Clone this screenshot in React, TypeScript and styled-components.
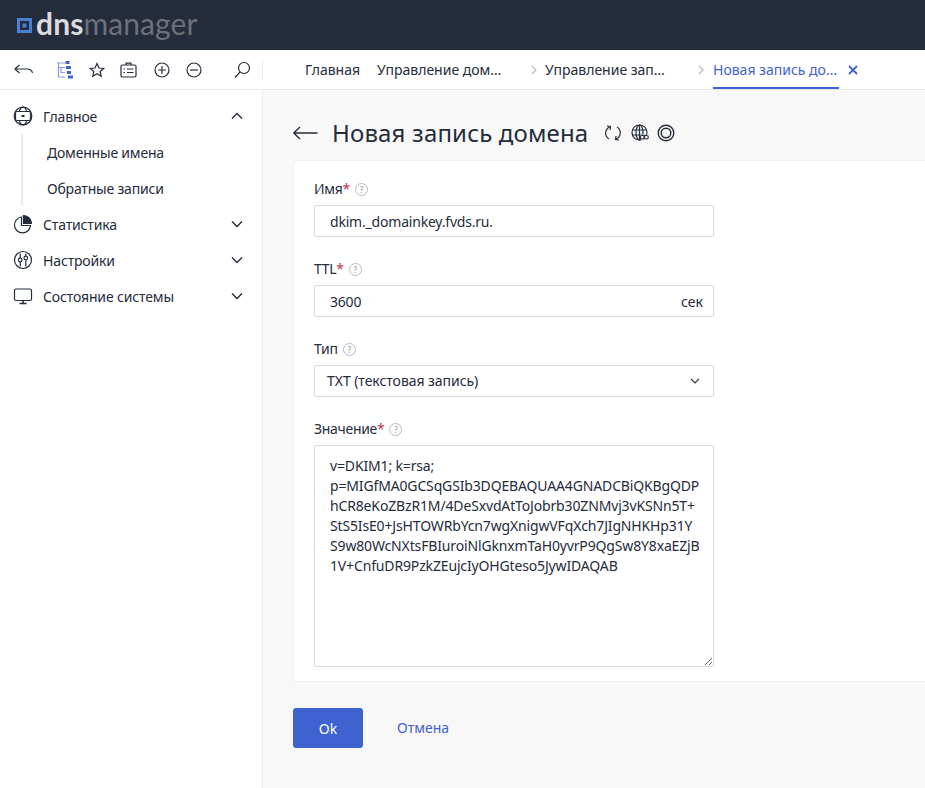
import React from "react";
import styled, { createGlobalStyle } from "styled-components";

const Global = createGlobalStyle`
  html, body { margin: 0; padding: 0; height: 100%; overflow: hidden; }
  body { font-family: "Noto Sans", "Open Sans", sans-serif; color: #252c3b; background: #f8f8f8; }
  * { box-sizing: border-box; }
`;

const Page = styled.div`
  width: 925px; height: 788px; display: flex; flex-direction: column; overflow: hidden;
`;
const Header = styled.header`
  height: 50px; background: #252c3b; display: flex; align-items: center; padding-left: 17px; gap: 3px; flex: none;
`;
const LogoText = styled.div`
  font-family: "Lato", sans-serif; font-size: 30px; line-height: 50px; letter-spacing: 0.1px; color: #6c717c; margin-top: -4px;
`;
const LogoStrong = styled.span`
  color: #d9dbde; font-weight: 700;
`;
const Toolbar = styled.div`
  height: 40px; background: #fff; border-bottom: 1px solid #e9e9ea; display: flex; flex: none;
`;
const ToolGroup = styled.div`
  width: 263px; display: flex; align-items: center; padding: 0 0 0 14px; position: relative;
`;
const ToolDivider = styled.div`
  width: 1px; height: 20px; background: #ececec; position: absolute; right: 0; top: 10px;
`;
const ToolIcon = styled.svg<{ $gap: number; $tint?: boolean }>`
  width: 20px; height: 20px; flex: none; margin-right: ${p => p.$gap}px; fill: none;
  stroke: ${p => (p.$tint ? "#8ba0e0" : "#252c3b")}; stroke-width: 1.2;
`;
const Tabs = styled.nav`
  display: flex; align-items: stretch; padding-left: 42px; font-size: 14px;
`;
const Tab = styled.div<{ $w: number; $active?: boolean }>`
  width: ${p => p.$w}px; display: flex; align-items: center; white-space: nowrap; height: 39px;
  color: ${p => (p.$active ? "#3e62cf" : "#252c3b")};
  flex: none;
`;
const TabLabel = styled.span`
  display: inline-flex; align-items: center; height: 39px; width: 126px;
  border-bottom: 2px solid #3e62cf;
  padding-top: 2px;
`;
const Crumb = styled.svg<{ $end?: boolean }>`
  width: 6px; height: 10px; fill: none; stroke: #b5b8bd; stroke-width: 1.1; flex: none;
  margin: ${p => (p.$end ? "0 9px 0 auto" : "0 8px 0 0")};
`;
const CloseX = styled.svg`
  width: 10px; height: 10px; margin-left: 9px; fill: none; stroke: #3e62cf; stroke-width: 1.8; flex: none;
`;
const Body = styled.div`
  flex: 1; display: flex; min-height: 0;
`;
const Sidebar = styled.aside`
  width: 263px; background: #fff; border-right: 1px solid #ececec; padding-top: 8px; flex: none; font-size: 14px;
`;
const NavRow = styled.div`
  height: 36px; display: flex; align-items: center; padding-left: 13px;
`;
const NavIcon = styled.svg`
  width: 20px; height: 20px; margin-right: 10px; fill: none; stroke: #252c3b; stroke-width: 1.2; flex: none;
`;
const NavLabel = styled.span`
  flex: 1; letter-spacing: -0.15px;
`;
const Chevron = styled.svg`
  width: 12px; height: 8px; margin-right: 19px; fill: none; stroke: #252c3b; stroke-width: 1.4; flex: none;
`;
const SubList = styled.div`
  margin-left: 21px; border-left: 2px solid #ececec; padding-left: 24px;
`;
const SubItem = styled.div`
  height: 36px; display: flex; align-items: center; letter-spacing: -0.2px;
`;
const Main = styled.main`
  flex: 1; padding: 0 0 0 30px; min-width: 0;
`;
const TitleRow = styled.div`
  height: 70px; display: flex; align-items: center; padding-top: 16px;
`;
const BackArrow = styled.svg`
  width: 25px; height: 14px; margin-right: 14px; fill: none; stroke: #252c3b; stroke-width: 1.3; flex: none;
`;
const Title = styled.h1`
  margin: 0 16px 0 0; font-size: 24px; font-weight: 400; line-height: 32px; white-space: nowrap; letter-spacing: 0.16px;
`;
const TitleIcon = styled.svg<{ $gap: number }>`
  width: 18px; height: 18px; margin-right: ${p => p.$gap}px; fill: none; stroke: #252c3b; stroke-width: 1.2; flex: none;
`;
const Card = styled.section`
  background: #fff; border: 1px solid #efefef; border-right: none; border-radius: 4px 0 0 4px; height: 522px; padding: 20px 0 0 20px;
`;
const Field = styled.div`
  width: 400px; margin-bottom: 24px;
`;
const LabelRow = styled.div`
  height: 16px; display: flex; align-items: center; font-size: 14px; line-height: 16px; margin-bottom: 8px; letter-spacing: -0.3px;
`;
const Req = styled.span`
  color: #c2334d;
`;
const Hint = styled.span`
  width: 13px; height: 13px; border: 1px solid #b9bbc0; border-radius: 50%; margin-left: 5px; color: #8d9097;
  font-size: 8px; line-height: 11px; text-align: center; flex: none; letter-spacing: 0;
`;
const InputWrap = styled.div`
  height: 32px; border: 1px solid #d9d9d9; border-radius: 2px; background: #fff; display: flex; align-items: center;
  font-size: 14px;
`;
const TextInput = styled.input`
  border: none; outline: none; background: transparent; flex: 1; min-width: 0; height: 30px; padding: 0 0 0 15px;
  font: inherit; color: #252c3b; letter-spacing: -0.2px;
`;
const Unit = styled.span`
  margin-right: 10px;
`;
const SelectValue = styled.span`
  flex: 1; padding-left: 12px; letter-spacing: -0.05px; margin-top: -1px;
`;
const SelectChevron = styled.svg`
  width: 10px; height: 6px; margin-right: 13px; fill: none; stroke: #252c3b; stroke-width: 1.2; flex: none;
`;
const Area = styled.textarea`
  display: block; width: 400px; height: 222px; border: 1px solid #d9d9d9; border-radius: 2px; outline: none;
  padding: 10px 15px 6px; font: inherit; font-size: 14px; line-height: 20px; color: #252c3b; background: #fff;
  white-space: pre; overflow: hidden; letter-spacing: -0.15px;
`;
const Actions = styled.div`
  display: flex; align-items: center; margin-top: 26px;
`;
const OkButton = styled.button`
  width: 70px; height: 40px; border: none; border-radius: 3px; background: #3e62cf; color: #fff; font: inherit; font-size: 14px; padding: 0;
`;
const CancelLink = styled.a`
  margin-left: 34px; color: #3e62cf; font-size: 14px; margin-top: -1px;
`;

const chevronDown = "M1 1.5 L6 6.5 L11 1.5";
const chevronUp = "M1 6.5 L6 1.5 L11 6.5";

const value = `v=DKIM1; k=rsa;
p=MIGfMA0GCSqGSIb3DQEBAQUAA4GNADCBiQKBgQDP
hCR8eKoZBzR1M/4DeSxvdAtToJobrb30ZNMvj3vKSNn5T+
StS5IsE0+JsHTOWRbYcn7wgXnigwVFqXch7JIgNHKHp31Y
S9w80WcNXtsFBIuroiNlGknxmTaH0yvrP9QgSw8Y8xaEZjB
1V+CnfuDR9PzkZEujcIyOHGteso5JywIDAQAB`;

export default function App() {
  return (
    <Page>
      <Global />
      <Header>
        <svg width="16" height="16" viewBox="0 0 16 16" aria-hidden="true">
          <path d="M0 1h15v15H0z M3 4v9h9V4z" fill="#4a7fd6" fillRule="evenodd" />
          <rect x="5.5" y="6.5" width="4" height="4" fill="#4a7fd6" />
        </svg>
        <LogoText><LogoStrong>dns</LogoStrong>manager</LogoText>
      </Header>
      <Toolbar>
        <ToolGroup>
          <ToolIcon $gap={22} viewBox="0 0 20 20">
            <path d="M0.8 9 H13 C16 9 18 10.5 18.5 13 M0.8 9 L5.5 5 M0.8 9 L5.5 13" />
          </ToolIcon>
          <ToolIcon $gap={11} $tint viewBox="0 0 20 20">
            <path d="M1 3 H9 M2.5 3 V17 H9 M2.5 7.5 H9 M5 7.5 V12.5 H9" />
            <rect x="9.5" y="1" width="4" height="3" fill="#3e62cf" stroke="none" />
            <rect x="10" y="6" width="5" height="3" fill="#3e62cf" stroke="none" />
            <rect x="11" y="11" width="4" height="3" fill="#3e62cf" stroke="none" />
            <rect x="12" y="15.5" width="5" height="3" fill="#3e62cf" stroke="none" />
          </ToolIcon>
          <ToolIcon $gap={12} viewBox="0 0 20 20">
            <path d="M10 3.5 L12 8 L16.7 8.4 L13.1 11.5 L14.2 16.2 L10 13.7 L5.8 16.2 L6.9 11.5 L3.3 8.4 L8 8 Z" />
          </ToolIcon>
          <ToolIcon $gap={13} viewBox="0 0 20 20">
            <rect x="2" y="5" width="15" height="12" rx="1.5" />
            <path d="M7 5 V3.2 H12 V5 M4.5 9 H6 M8 9 H14.5 M4.5 12.5 H6 M8 12.5 H14.5" />
          </ToolIcon>
          <ToolIcon $gap={12} viewBox="0 0 20 20">
            <circle cx="10" cy="10" r="7" />
            <path d="M10 6 V14 M6 10 H14" />
          </ToolIcon>
          <ToolIcon $gap={28} viewBox="0 0 20 20">
            <circle cx="10" cy="10" r="7" />
            <path d="M6 10 H14" />
          </ToolIcon>
          <ToolIcon $gap={0} viewBox="0 0 20 20">
            <circle cx="12" cy="8" r="5.5" />
            <path d="M8 12 L3 17.5" />
          </ToolIcon>
          <ToolDivider />
        </ToolGroup>
        <Tabs>
          <Tab $w={72}>Главная</Tab>
          <Tab $w={154}>Управление дом…</Tab>
          <Tab $w={182}>
            <Crumb viewBox="0 0 6 10"><path d="M1 1 L5 5 L1 9" /></Crumb>
            Управление зап…
            <Crumb $end viewBox="0 0 6 10"><path d="M1 1 L5 5 L1 9" /></Crumb>
          </Tab>
          <Tab $w={160} $active>
            <TabLabel>Новая запись до…</TabLabel>
            <CloseX viewBox="0 0 10 10"><path d="M1 1 L9 9 M9 1 L1 9" /></CloseX>
          </Tab>
        </Tabs>
      </Toolbar>
      <Body>
        <Sidebar>
          <NavRow>
            <NavIcon viewBox="0 0 20 20">
              <circle cx="10" cy="10" r="8.8" />
              <ellipse cx="10" cy="10" rx="4.5" ry="8.8" />
              <rect x="2.5" y="5.5" width="15" height="9" rx="1.5" fill="#fff" />
              <rect x="8.5" y="9" width="3" height="2" fill="#252c3b" stroke="none" />
            </NavIcon>
            <NavLabel>Главное</NavLabel>
            <Chevron viewBox="0 0 12 8"><path d={chevronUp} /></Chevron>
          </NavRow>
          <SubList>
            <SubItem>Доменные имена</SubItem>
            <SubItem>Обратные записи</SubItem>
          </SubList>
          <NavRow>
            <NavIcon viewBox="0 0 20 20">
              <path d="M8.5 3 A8 8 0 1 0 17.5 11.5 H8.5 Z" />
              <path d="M10.5 1.5 A8 8 0 0 1 18.5 9.5 H10.5 Z" fill="#252c3b" />
            </NavIcon>
            <NavLabel>Статистика</NavLabel>
            <Chevron viewBox="0 0 12 8"><path d={chevronDown} /></Chevron>
          </NavRow>
          <NavRow>
            <NavIcon viewBox="0 0 20 20">
              <circle cx="10" cy="10" r="8.5" />
              <path d="M7.2 3.5 V8 M7.2 12 V16.5 M12.8 3.5 V6 M12.8 10 V16.5" />
              <circle cx="7.2" cy="10" r="1.8" />
              <circle cx="12.8" cy="8" r="1.8" />
            </NavIcon>
            <NavLabel>Настройки</NavLabel>
            <Chevron viewBox="0 0 12 8"><path d={chevronDown} /></Chevron>
          </NavRow>
          <NavRow>
            <NavIcon viewBox="0 0 20 20">
              <rect x="1.5" y="3" width="17" height="11.5" rx="1.5" />
              <path d="M10 14.5 V17 M6.5 17.5 H13.5" strokeWidth="1.6" />
            </NavIcon>
            <NavLabel>Состояние системы</NavLabel>
            <Chevron viewBox="0 0 12 8"><path d={chevronDown} /></Chevron>
          </NavRow>
        </Sidebar>
        <Main>
          <TitleRow>
            <BackArrow viewBox="0 0 25 14"><path d="M0.8 7 H24.5 M7 1 L0.8 7 L7 13" /></BackArrow>
            <Title>Новая запись домена</Title>
            <TitleIcon $gap={9} viewBox="0 0 18 18">
              <path d="M6.5 2.5 C2 4 0.5 9 2.5 12.5 C3 13.5 4 14.5 5 15 M3 2 L6.5 2.5 L6 6" />
              <path d="M11.5 15.5 C16 14 17.5 9 15.5 5.5 C15 4.5 14 3.5 13 3 M15 16 L11.5 15.5 L12 12" />
            </TitleIcon>
            <TitleIcon $gap={8} viewBox="0 0 18 18">
              <circle cx="8.5" cy="8.5" r="7.5" />
              <ellipse cx="8.5" cy="8.5" rx="3.5" ry="7.5" />
              <path d="M1 6 H16 M1 11 H16 M8.5 1 V16" />
              <rect x="9" y="10.5" width="8.5" height="5.5" rx="2.7" fill="#fff" stroke="none" />
              <rect x="9.3" y="11.5" width="4.5" height="3.5" rx="1.7" />
              <rect x="12.8" y="11.5" width="4.5" height="3.5" rx="1.7" />
            </TitleIcon>
            <TitleIcon $gap={0} viewBox="0 0 18 18">
              <circle cx="9" cy="9" r="7.8" strokeWidth="1.4" />
              <circle cx="9" cy="9" r="4.8" strokeWidth="1.4" />
            </TitleIcon>
          </TitleRow>
          <Card>
            <Field>
              <LabelRow>Имя<Req>*</Req><Hint>?</Hint></LabelRow>
              <InputWrap><TextInput readOnly value="dkim._domainkey.fvds.ru." /></InputWrap>
            </Field>
            <Field>
              <LabelRow>TTL<Req>*</Req><Hint>?</Hint></LabelRow>
              <InputWrap><TextInput readOnly value="3600" /><Unit>сек</Unit></InputWrap>
            </Field>
            <Field>
              <LabelRow>Тип<Hint>?</Hint></LabelRow>
              <InputWrap>
                <SelectValue>TXT (текстовая запись)</SelectValue>
                <SelectChevron viewBox="0 0 10 6"><path d="M1 0.8 L5 4.8 L9 0.8" /></SelectChevron>
              </InputWrap>
            </Field>
            <Field>
              <LabelRow>Значение<Req>*</Req><Hint>?</Hint></LabelRow>
              <Area readOnly value={value} />
            </Field>
          </Card>
          <Actions>
            <OkButton>Ok</OkButton>
            <CancelLink>Отмена</CancelLink>
          </Actions>
        </Main>
      </Body>
    </Page>
  );
}
